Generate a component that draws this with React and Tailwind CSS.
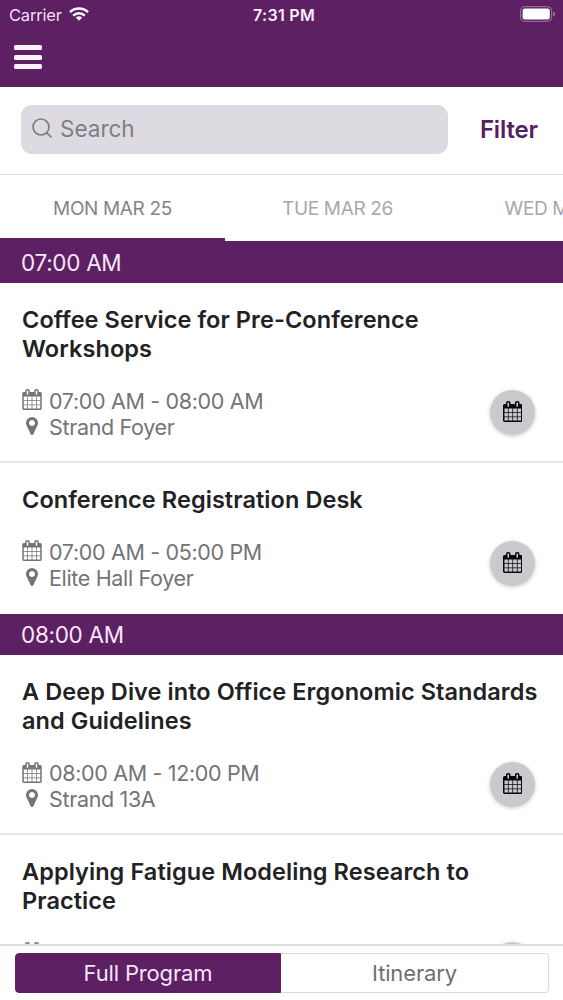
import { Search } from 'lucide-react'

const tabs = [
    { label: 'MON MAR 25', active: true },
    { label: 'TUE MAR 26', active: false },
    { label: 'WED MAR 27', active: false }
]

const program = [
    {
        time: '07:00 AM',
        sessions: [
            { title: 'Coffee Service for Pre-Conference Workshops', hours: '07:00 AM - 08:00 AM', room: 'Strand Foyer' },
            { title: 'Conference Registration Desk', hours: '07:00 AM - 05:00 PM', room: 'Elite Hall Foyer' }
        ]
    },
    {
        time: '08:00 AM',
        sessions: [
            { title: 'A Deep Dive into Office Ergonomic Standards and Guidelines', hours: '08:00 AM - 12:00 PM', room: 'Strand 13A' },
            { title: 'Applying Fatigue Modeling Research to Practice', hours: '', room: '' }
        ]
    }
]

function CalendarIcon({ className }) {
    return (
        <svg viewBox="64 0 1664 1792" fill="currentColor" className={className}>
            <path d="M192 1664h288v-288h-288v288zM544 1664h320v-288h-320v288zM192 1312h288v-320h-288v320zM544 1312h320v-320h-320v320zM192 928h288v-288h-288v288zM928 1664h320v-288h-320v288zM544 928h320v-288h-320v288zM1312 1664h288v-288h-288v288zM928 1312h320v-320h-320v320zM576 448v-288q0-13-9.5-22.5t-22.5-9.5h-64q-13 0-22.5 9.5t-9.5 22.5v288q0 13 9.5 22.5t22.5 9.5h64q13 0 22.5-9.5t9.5-22.5zM1312 1312h288v-320h-288v320zM928 928h320v-288h-320v288zM1312 928h288v-288h-288v288zM1344 448v-288q0-13-9.5-22.5t-22.5-9.5h-64q-13 0-22.5 9.5t-9.5 22.5v288q0 13 9.5 22.5t22.5 9.5h64q13 0 22.5-9.5t9.5-22.5zM1728 384v1280q0 52-38 90t-90 38h-1408q-52 0-90-38t-38-90v-1280q0-52 38-90t90-38h128v-96q0-66 47-113t113-47h64q66 0 113 47t47 113v96h384v-96q0-66 47-113t113-47h64q66 0 113 47t47 113v96h128q52 0 90 38t38 90z" />
        </svg>
    )
}

function MarkerIcon({ className }) {
    return (
        <svg viewBox="384 128 1024 1536" fill="currentColor" className={className}>
            <path d="M1152 640q0-106-75-181t-181-75-181 75-75 181 75 181 181 75 181-75 75-181zm256 0q0 109-33 179l-364 774q-16 33-47.5 52t-67.5 19-67.5-19-46.5-52l-365-774q-33-70-33-179 0-212 150-362t362-150 362 150 150 362z" />
        </svg>
    )
}

function StatusBar() {
    return (
        <div className="flex h-7 items-center justify-between pr-[7px] pl-[9px] text-white">
            <div className="flex flex-1 items-center gap-[7px] pt-[2px] text-[16.5px] tracking-[-0.2px] text-[#f3dff5]">
                Carrier
                <svg viewBox="0 0 20 14" className="mb-[2px] h-[14px] w-5" fill="none" stroke="white" strokeWidth="2.5">
                    <path d="M1 5.2a13 13 0 0 1 18 0" />
                    <path d="M4.2 8.6a8.4 8.4 0 0 1 11.6 0" />
                    <path d="M10 13.8 6.9 10.7a4.5 4.5 0 0 1 6.2 0z" fill="white" stroke="none" />
                </svg>
            </div>
            <div className="pt-[2px] pl-[3px] text-[16px] font-semibold tracking-[0.3px] text-[#faf0fb]">7:31 PM</div>
            <div className="flex flex-1 justify-end">
                <svg viewBox="0 0 36 16" className="h-4 w-9" fill="none">
                    <rect x="0.7" y="0.7" width="31" height="14.6" rx="4" stroke="#a27aa7" strokeWidth="1" />
                    <rect x="2.6" y="2.6" width="27.2" height="10.8" rx="2.2" fill="white" />
                    <path d="M33.4 5.5q3 2.5 0 5z" fill="#b28db5" />
                </svg>
            </div>
        </div>
    )
}

function SessionRow({ session }) {
    return (
        <div className="border-b-2 border-[#e6e5e7] px-[22px] pt-[22px] pb-[21px] last:border-b-0 last:pb-[23px]">
            <h2 className="text-[23.5px] leading-[29px] font-semibold tracking-[0.07px] text-[#222124]">{session.title}</h2>
            <div className="mt-[25px] flex h-[52px] items-start justify-between pr-[6px] text-[#747376]">
                <div className="text-[21.5px] leading-[26px] tracking-[-0.34px]">
                    <div className="flex h-[26px] items-center">
                        <CalendarIcon className="mr-[7px] mb-[2px] h-[21px] w-[20px]" />
                        {session.hours}
                    </div>
                    <div className="flex h-[26px] items-center">
                        <MarkerIcon className="mr-[11px] mb-[2px] ml-1 h-[18px] w-3" />
                        {session.room}
                    </div>
                </div>
                <button className="mt-[2px] flex h-[45px] w-[45px] items-center justify-center rounded-full bg-[#cbc9cd] text-[#0b080d] shadow-[0_1px_4px_rgba(0,0,0,0.22)]">
                    <CalendarIcon className="mb-[2px] h-[21px] w-[19.5px]" />
                </button>
            </div>
        </div>
    )
}

export default function App() {
    return (
        <div className="flex h-[1000px] w-[563px] flex-col overflow-hidden bg-white font-['Inter','Liberation_Sans',sans-serif]">
            <header className="h-[86.5px] shrink-0 bg-[#5c2063]">
                <StatusBar />
                <button className="mt-[17px] ml-[13.5px] flex flex-col gap-[4.5px]" aria-label="Menu">
                    <span className="h-[5px] w-[28.5px] rounded-[1.5px] bg-[#fbf2fc]" />
                    <span className="h-[5px] w-[28.5px] rounded-[1.5px] bg-[#fbf2fc]" />
                    <span className="h-[5px] w-[28.5px] rounded-[1.5px] bg-[#fbf2fc]" />
                </button>
            </header>

            <div className="flex h-[88.5px] shrink-0 items-start border-b border-[#dcdadd] pt-[18.5px] pr-[25px] pl-[21px]">
                <div className="flex h-[48.5px] w-[427px] items-center rounded-[11px] bg-[#dddbe1] pl-[9px] text-[22.5px] text-[#7f7d84]">
                    <Search className="mr-[6px] mb-[2px] h-6 w-6" strokeWidth={1.7} />
                    Search
                </div>
                <button className="mt-[7px] ml-auto text-[24px] font-semibold tracking-[-0.15px] text-[#552061]">Filter</button>
            </div>

            {/* Day tabs */}
            <nav className="flex h-[66px] shrink-0 overflow-hidden">
                {tabs.map((tab) => (
                    <button
                        key={tab.label}
                        className={
                            tab.active
                                ? 'w-[225px] shrink-0 border-b-3 border-[#5c2063] pt-[5px] text-[19px] tracking-[-0.35px] text-[#85838a]'
                                : 'w-[225px] shrink-0 border-b-3 border-transparent pt-[5px] text-[19px] tracking-[-0.35px] text-[#a9a7ac]'
                        }
                    >
                        {tab.label}
                    </button>
                ))}
            </nav>

            <main className="min-h-0 flex-1 overflow-hidden">
                {program.map((slot) => (
                    <section key={slot.time}>
                        <div className="flex h-[41.5px] items-center bg-[#5c2063] pt-[2px] pl-[21px] text-[22.5px] tracking-[-0.3px] text-[#f8e8fa]">
                            {slot.time}
                        </div>
                        {slot.sessions.map((session) => (
                            <SessionRow key={session.title} session={session} />
                        ))}
                    </section>
                ))}
            </main>

            <footer className="flex h-14 shrink-0 border-t-2 border-[#dddcde] pt-[7px] pr-[14px] pb-[7px] pl-[15px] text-[22px] tracking-[-0.15px]">
                <button className="w-[266px] rounded-l-[4px] border border-[#5c2063] bg-[#5c2063] text-[#f8e4fa]">Full Program</button>
                <button className="flex-1 rounded-r-[4px] border border-l-0 border-[#dcd8df] text-[#6b6f77]">Itinerary</button>
            </footer>
        </div>
    )
}
